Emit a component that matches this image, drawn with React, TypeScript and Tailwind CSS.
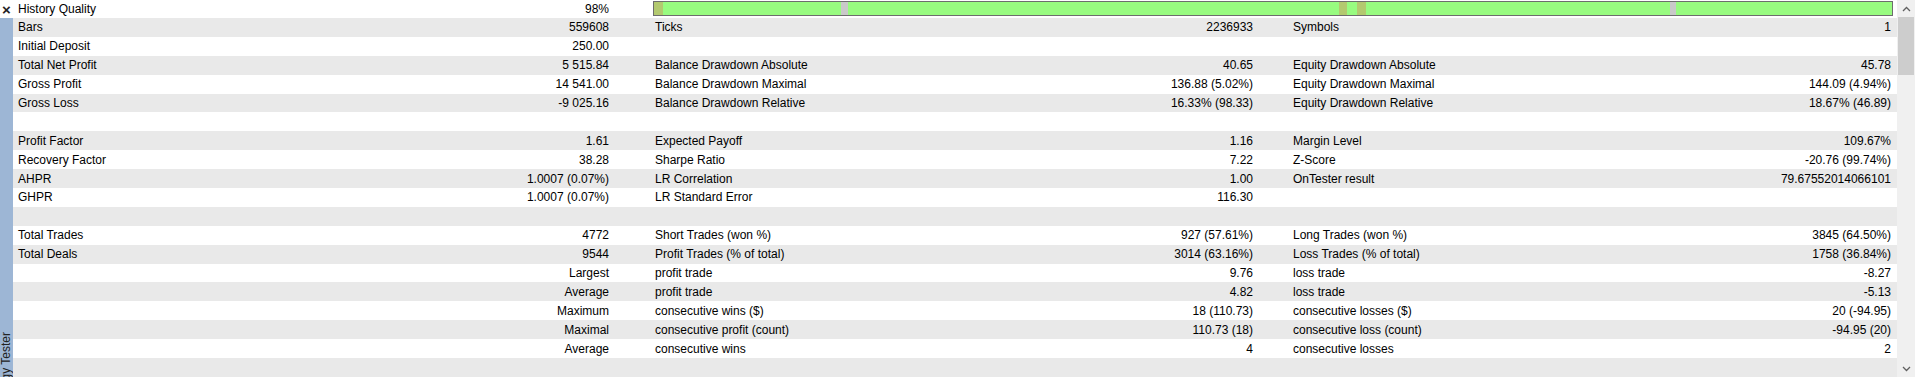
type Row = [string, string, string?, string?, string?, string?]

const rows: Row[] = [
  ['Bars', '559608', 'Ticks', '2236933', 'Symbols', '1'],
  ['Initial Deposit', '250.00'],
  ['Total Net Profit', '5 515.84', 'Balance Drawdown Absolute', '40.65', 'Equity Drawdown Absolute', '45.78'],
  ['Gross Profit', '14 541.00', 'Balance Drawdown Maximal', '136.88 (5.02%)', 'Equity Drawdown Maximal', '144.09 (4.94%)'],
  ['Gross Loss', '-9 025.16', 'Balance Drawdown Relative', '16.33% (98.33)', 'Equity Drawdown Relative', '18.67% (46.89)'],
  ['', ''],
  ['Profit Factor', '1.61', 'Expected Payoff', '1.16', 'Margin Level', '109.67%'],
  ['Recovery Factor', '38.28', 'Sharpe Ratio', '7.22', 'Z-Score', '-20.76 (99.74%)'],
  ['AHPR', '1.0007 (0.07%)', 'LR Correlation', '1.00', 'OnTester result', '79.67552014066101'],
  ['GHPR', '1.0007 (0.07%)', 'LR Standard Error', '116.30'],
  ['', ''],
  ['Total Trades', '4772', 'Short Trades (won %)', '927 (57.61%)', 'Long Trades (won %)', '3845 (64.50%)'],
  ['Total Deals', '9544', 'Profit Trades (% of total)', '3014 (63.16%)', 'Loss Trades (% of total)', '1758 (36.84%)'],
  ['', 'Largest', 'profit trade', '9.76', 'loss trade', '-8.27'],
  ['', 'Average', 'profit trade', '4.82', 'loss trade', '-5.13'],
  ['', 'Maximum', 'consecutive wins ($)', '18 (110.73)', 'consecutive losses ($)', '20 (-94.95)'],
  ['', 'Maximal', 'consecutive profit (count)', '110.73 (18)', 'consecutive loss (count)', '-94.95 (20)'],
  ['', 'Average', 'consecutive wins', '4', 'consecutive losses', '2'],
  ['', ''],
]

// quality bar segments: [width px, colour]
const quality: [number, string][] = [
  [9, '#b3c96f'],
  [178, '#98fb80'],
  [7, '#c9c9c9'],
  [491, '#98fb80'],
  [8, '#b3c96f'],
  [10, '#98fb80'],
  [9, '#b3c96f'],
  [304, '#98fb80'],
  [6, '#c9c9c9'],
  [216, '#98fb80'],
]

function Cell({ label, value, className }: { label?: string; value?: string; className: string }) {
  return (
    <div className={`flex items-center justify-between whitespace-nowrap ${className}`}>
      <span>{label}</span>
      <span>{value}</span>
    </div>
  )
}

export default function App() {
  return (
    <div
      className="flex w-[1915px] h-[377px] overflow-hidden bg-white text-[12px] text-black"
      style={{ fontFamily: '"Liberation Sans", Arial, sans-serif' }}
    >
      <div className="flex flex-col w-[13px] shrink-0 overflow-hidden">
        <div className="h-[18px] flex items-center justify-center bg-white text-[15px] font-bold leading-none text-[#222]">
          ×
        </div>
        <div className="flex-1 bg-[#9db6d5] pt-[314px] overflow-hidden">
          <div className="[writing-mode:vertical-rl] rotate-180 text-[12px] leading-[13px] text-[#222] whitespace-nowrap">
            Strategy Tester
          </div>
        </div>
      </div>

      <div className="flex flex-col w-[1884px] shrink-0">
        <div className="flex h-[18px] bg-white">
          <Cell label="History Quality" value="98%" className="w-[640px] pl-[5px] pr-[44px]" />
          <div className="flex w-[1240px] h-[15px] mt-[1px] border border-[#6d6d6d]">
            {quality.map(([w, c], i) => (
              <div key={i} className="h-full" style={{ width: w, background: c }} />
            ))}
          </div>
        </div>
        {rows.map((r, i) => (
          <div key={i} className={`flex h-[19px] ${i % 2 === 0 ? 'bg-[#e9e9e9]' : 'bg-white'}`}>
            <Cell label={r[0]} value={r[1]} className="w-[642px] pl-[5px] pr-[46px]" />
            <Cell label={r[2]} value={r[3]} className="w-[638px] pr-[40px]" />
            <Cell label={r[4]} value={r[5]} className="w-[604px] pr-[6px]" />
          </div>
        ))}
      </div>

      <div className="flex flex-col w-[18px] shrink-0 bg-[#f0f0f0]">
        <div className="h-[17px] flex items-center justify-center">
          <svg width="9" height="6" viewBox="0 0 9 6">
            <path d="M1 5 L4.5 1.5 L8 5" fill="none" stroke="#606060" strokeWidth="1.3" />
          </svg>
        </div>
        <div className="mx-[1px] h-[58px] bg-[#cdcdcd]" />
        <div className="flex-1" />
        <div className="h-[17px] flex items-center justify-center">
          <svg width="9" height="6" viewBox="0 0 9 6">
            <path d="M1 1 L4.5 4.5 L8 1" fill="none" stroke="#606060" strokeWidth="1.3" />
          </svg>
        </div>
      </div>
    </div>
  )
}
